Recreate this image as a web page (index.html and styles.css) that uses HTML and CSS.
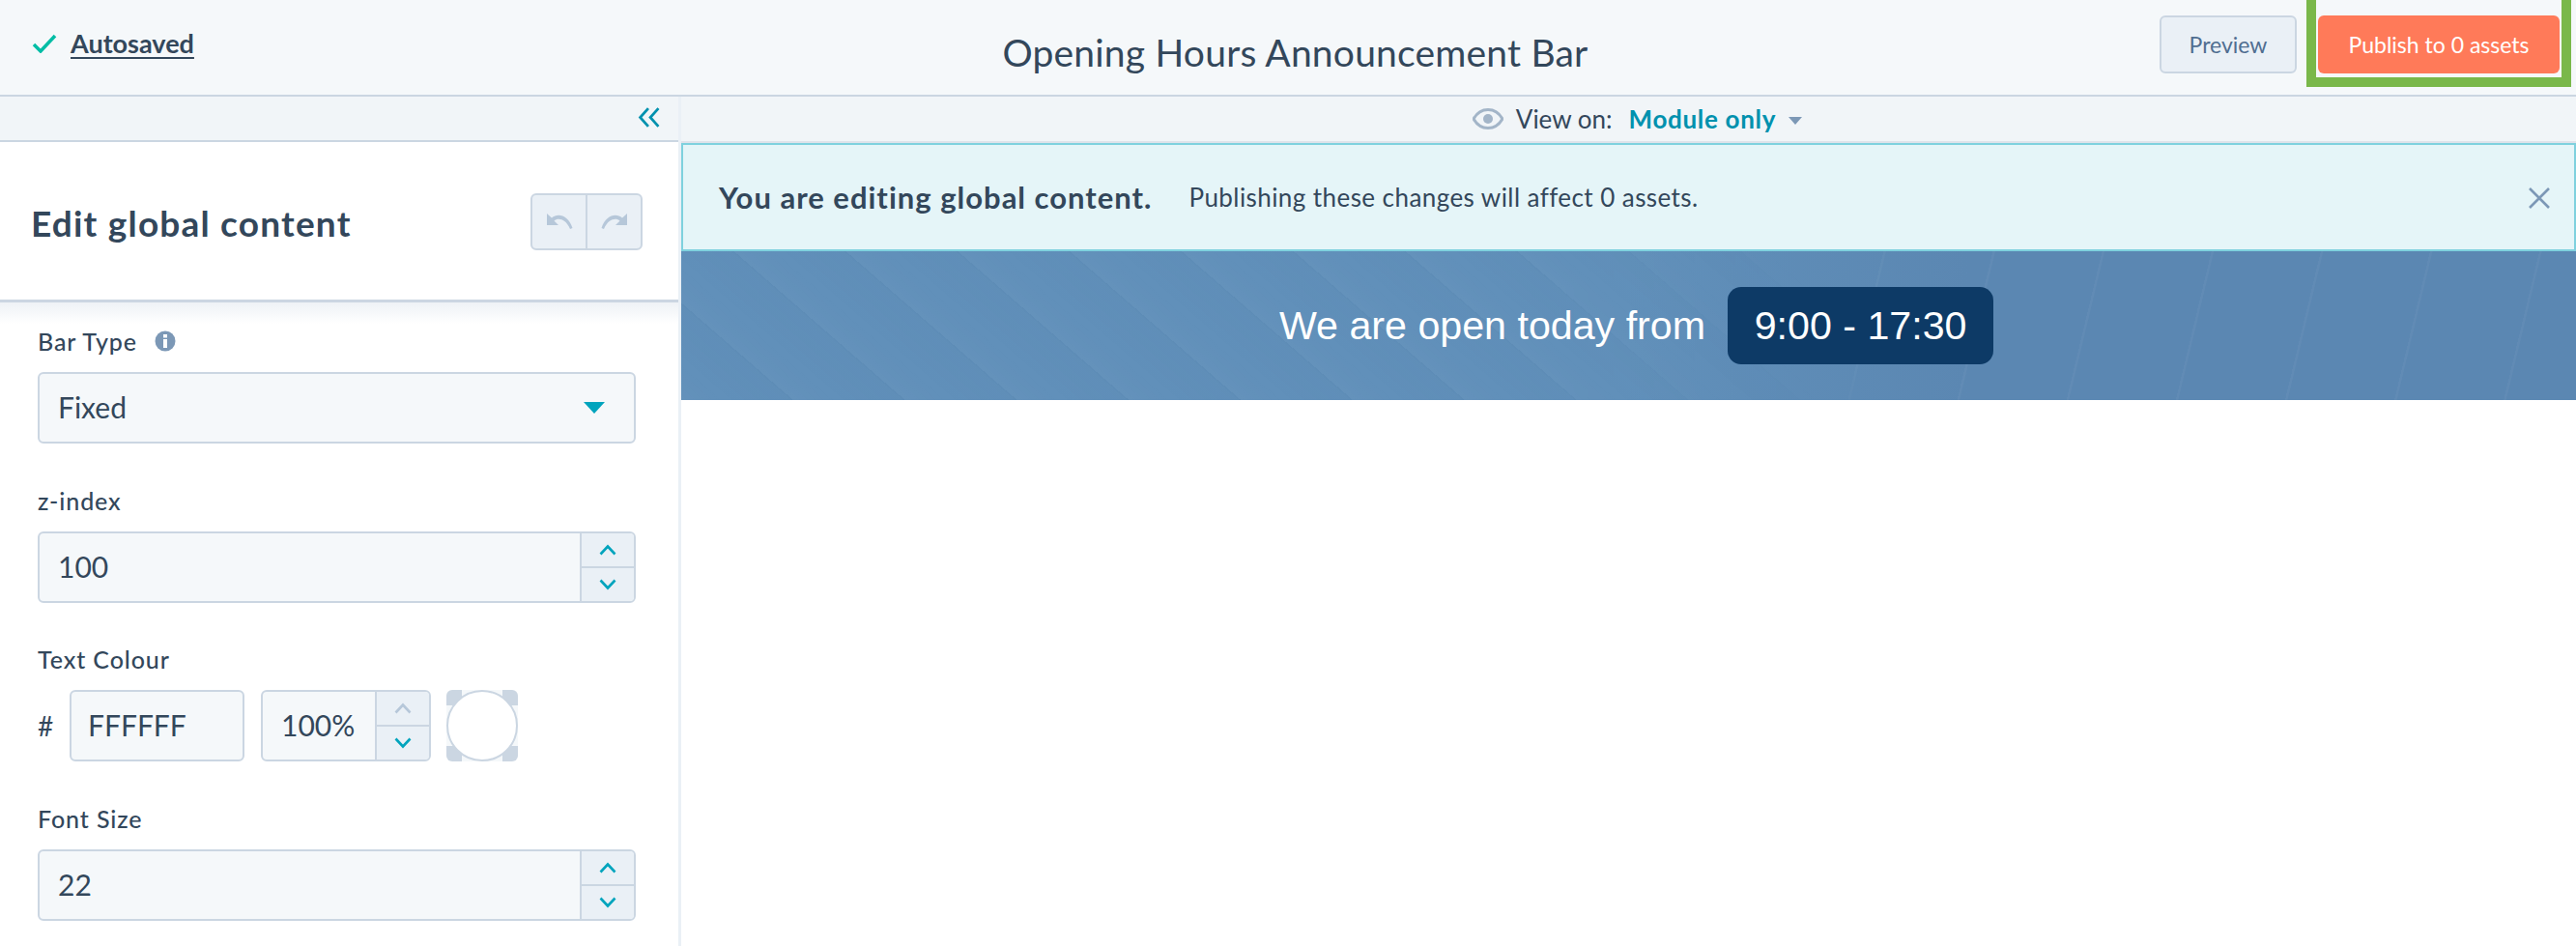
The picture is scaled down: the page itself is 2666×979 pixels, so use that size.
FILE: index.html
```html
<!DOCTYPE html>
<html lang="en">
<head>
<meta charset="utf-8">
<title>Opening Hours Announcement Bar</title>
<link rel="stylesheet" href="styles.css">
</head>
<body>
<header class="topbar">
  <div class="saved">
    <svg class="check" viewBox="0 0 26 20"><path d="M2 11l7 7L24 2" fill="none" stroke="#00bda5" stroke-width="3.500"/></svg>
    <a class="saved-link">Autosaved</a>
  </div>
  <h1 class="doc-title">Opening Hours Announcement Bar</h1>
  <div class="actions">
    <button class="btn-preview">Preview</button>
    <button class="btn-publish">Publish to 0 assets</button>
  </div>
  <div class="highlight"></div>
</header>
<div class="workspace">
  <aside class="sidebar">
    <div class="collapse-row">
      <svg class="collapse" viewBox="0 0 22 20"><path d="M10 1L2 10l8 9M20 1l-8 9 8 9" fill="none" stroke="#0091ae" stroke-width="2.600"/></svg>
    </div>
    <div class="panel-head">
      <h2 class="panel-title">Edit global content</h2>
      <div class="undo-group">
        <span class="undo-btn"><svg viewBox="0 0 30 22" class="undo-icon"><path d="M2 2v12h12l-4.500-4.500C13 6.500 21 6.500 26 18l2.500-1C24 3 13 1 7 6.500z" fill="#b6c7d9"/></svg></span>
        <span class="undo-btn"><svg viewBox="0 0 30 22" class="undo-icon flip"><path d="M2 2v12h12l-4.500-4.500C13 6.500 21 6.500 26 18l2.500-1C24 3 13 1 7 6.500z" fill="#b6c7d9"/></svg></span>
      </div>
    </div>
    <div class="fields">
      <div class="field">
        <label class="field-label">Bar Type
          <svg class="info" viewBox="0 0 22 22"><circle cx="11" cy="11" r="10.500" fill="#7c98b6"/><rect x="9" y="9" width="4" height="9" fill="#fff"/><rect x="9" y="4" width="4" height="3.500" fill="#fff"/></svg>
        </label>
        <div class="input select"><span class="value">Fixed</span><span class="caret"></span></div>
      </div>
      <div class="field">
        <label class="field-label">z-index</label>
        <div class="input number">
          <span class="value">100</span>
          <div class="stepper">
            <span class="step"><svg class="chev" viewBox="0 0 18 12"><path d="M1.500 10.500L9 2.500l7.500 8" fill="none" stroke="#00a4bd" stroke-width="2.600"/></svg></span>
            <span class="step"><svg class="chev" viewBox="0 0 18 12"><path d="M1.500 1.500L9 9.500l7.500-8" fill="none" stroke="#00a4bd" stroke-width="2.600"/></svg></span>
          </div>
        </div>
      </div>
      <div class="field">
        <label class="field-label">Text Colour</label>
        <div class="color-row">
          <span class="hash">#</span>
          <div class="input hex"><span class="value">FFFFFF</span></div>
          <div class="input percent">
            <span class="value">100%</span>
            <div class="stepper">
              <span class="step"><svg class="chev" viewBox="0 0 18 12"><path d="M1.500 10.500L9 2.500l7.500 8" fill="none" stroke="#b6c7d9" stroke-width="2.600"/></svg></span>
              <span class="step"><svg class="chev" viewBox="0 0 18 12"><path d="M1.500 1.500L9 9.500l7.500-8" fill="none" stroke="#00a4bd" stroke-width="2.600"/></svg></span>
            </div>
          </div>
          <div class="swatch"><span class="swatch-circle"></span></div>
        </div>
      </div>
      <div class="field">
        <label class="field-label">Font Size</label>
        <div class="input number">
          <span class="value">22</span>
          <div class="stepper">
            <span class="step"><svg class="chev" viewBox="0 0 18 12"><path d="M1.500 10.500L9 2.500l7.500 8" fill="none" stroke="#00a4bd" stroke-width="2.600"/></svg></span>
            <span class="step"><svg class="chev" viewBox="0 0 18 12"><path d="M1.500 1.500L9 9.500l7.500-8" fill="none" stroke="#00a4bd" stroke-width="2.600"/></svg></span>
          </div>
        </div>
      </div>
    </div>
  </aside>
  <main class="preview">
    <div class="viewbar">
      <svg class="eye" viewBox="0 0 32 22"><path d="M1 11C5 4 10 1.500 16 1.500S27 4 31 11c-4 7-9 9.500-15 9.500S5 18 1 11z" fill="none" stroke="#a3b5c8" stroke-width="3"/><circle cx="16" cy="11" r="5" fill="#a3b5c8"/></svg>
      <span class="view-label">View on:</span>
      <span class="view-value">Module only</span>
      <span class="view-caret"></span>
    </div>
    <div class="notice">
      <strong class="notice-strong">You are editing global content.</strong>
      <span class="notice-text">Publishing these changes will affect 0 assets.</span>
      <svg class="close" viewBox="0 0 24 24"><path d="M2 2l20 20M22 2L2 22" fill="none" stroke="#7c98b6" stroke-width="2.600"/></svg>
    </div>
    <section class="announce">
      <span class="announce-text">We are open today from</span>
      <span class="hours">9:00 - 17:30</span>
    </section>
  </main>
</div>
</body>
</html>
```
FILE: styles.css
```css
* { box-sizing: border-box; }
html, body { margin: 0; height: 100%; overflow: hidden; }
body { font-family: Lato, "Liberation Sans", sans-serif; color: #33475b; background: #fff; display: flex; flex-direction: column; }

.topbar { position: relative; height: 100px; flex: none; background: #f5f8fa; border-bottom: 2px solid #cbd6e2; display: flex; align-items: center; justify-content: space-between; padding: 0 17px 0 33px; }
.saved { display: flex; align-items: center; gap: 14px; margin-top: -9px; }
.check { width: 26px; height: 20px; }
.saved-link { font-size: 27px; font-weight: 700; text-decoration: underline; text-decoration-thickness: 2px; text-underline-offset: 4px; }
.doc-title { position: absolute; left: 15px; right: 0; top: 32px; margin: 0; text-align: center; font-size: 39px; line-height: 44px; font-weight: 400; letter-spacing: .2px; }
.actions { display: flex; gap: 22px; margin-top: -6px; }
.btn-preview, .btn-publish { font-family: inherit; font-size: 23px; height: 60px; border-radius: 6px; padding: 0; }
.btn-preview { width: 142px; background: #eaf0f6; color: #506e91; border: 2px solid #cbd6e2; }
.btn-publish { width: 250px; background: #ff7a59; color: #fff; border: 0; }
.highlight { position: absolute; left: 2387px; top: -10px; width: 274px; height: 100px; border: 10px solid #7ab84a; }

.workspace { flex: 1; display: flex; min-height: 0; }
.sidebar { width: 705px; flex: none; background: #fff; border-right: 3px solid #eaf0f6; display: flex; flex-direction: column; }
.collapse-row { height: 47px; flex: none; background: #f1f5f8; border-bottom: 2px solid #cbd6e2; display: flex; align-items: center; justify-content: flex-end; padding: 0 18px 2px 0; }
.collapse { width: 24px; height: 21px; }
.panel-head { height: 166px; flex: none; border-bottom: 3px solid #cbd6e2; display: flex; align-items: center; justify-content: space-between; padding: 0 37px 0 32px; }
.panel-title { margin: 4px 0 0; font-size: 37px; font-weight: 700; letter-spacing: 1.2px; }
.undo-group { display: flex; width: 116px; height: 59px; background: #eaf0f6; border: 2px solid #cbd6e2; border-radius: 6px; margin-top: 2px; }
.undo-btn { flex: 1; display: flex; align-items: center; justify-content: center; }
.undo-btn + .undo-btn { border-left: 2px solid #cbd6e2; }
.undo-icon { width: 30px; height: 22px; }
.flip { transform: scaleX(-1); }

.fields { flex: 1; padding: 24px 44px 0 39px; background: linear-gradient(#eef2f6, #fff 22px); background-repeat: no-repeat; display: flex; flex-direction: column; gap: 42.6px; }
.field-label { display: flex; align-items: center; gap: 18px; font-size: 25px; letter-spacing: .9px; line-height: 32px; margin-bottom: 16px; font-weight: 500; }
.info { width: 22px; height: 22px; }
.input { height: 74px; background: #f5f8fa; border: 2px solid #cbd6e2; border-radius: 6px; display: flex; align-items: center; font-size: 30px; overflow: hidden; }
.value { padding-left: 19px; margin-top: -2px; }
.select { justify-content: space-between; padding-right: 30px; }
.caret { width: 0; height: 0; border-left: 11px solid transparent; border-right: 11px solid transparent; border-top: 12px solid #00a4bd; }
.number { justify-content: space-between; }
.stepper { width: 56px; align-self: stretch; flex: none; display: flex; flex-direction: column; border-left: 2px solid #cbd6e2; background: #eaf0f6; }
.step { flex: 1; display: flex; align-items: center; justify-content: center; }
.step + .step { border-top: 2px solid #cbd6e2; }
.chev { width: 18px; height: 12px; }
.color-row { display: flex; align-items: center; }
.hash { width: 33px; font-size: 28px; }
.hex { width: 181px; margin-right: 17px; }
.hex .value { padding-left: 17px; }
.percent { width: 176px; margin-right: 16px; justify-content: space-between; }
.swatch { width: 74px; height: 74px; border-radius: 6px; background-color: #f5f8fa; background-image: linear-gradient(#cbd6e2, #cbd6e2), linear-gradient(#cbd6e2, #cbd6e2), linear-gradient(#cbd6e2, #cbd6e2), linear-gradient(#cbd6e2, #cbd6e2); background-size: 16px 16px; background-repeat: no-repeat; background-position: 0 0, 100% 0, 0 100%, 100% 100%; display: flex; }
.swatch-circle { flex: 1; background: #fff; border: 2px solid #cbd6e2; border-radius: 50%; }

.preview { flex: 1; min-width: 0; display: flex; flex-direction: column; background: #fff; }
.viewbar { height: 48px; flex: none; background: #f1f5f8; border-bottom: 2px solid #dfe3eb; display: flex; align-items: center; justify-content: center; gap: 13px; font-size: 26px; padding: 0 0 0 18px; }
.eye { width: 32px; height: 22px; }
.view-value { font-weight: 700; color: #0091ae; margin-left: 4px; letter-spacing: .7px; }
.view-caret { width: 0; height: 0; border-left: 7px solid transparent; border-right: 7px solid transparent; border-top: 8px solid #7c98b6; margin-top: 3px; }
.notice { position: relative; height: 112px; flex: none; background: #e5f5f8; border: 2px solid #7fd1de; display: flex; align-items: center; padding: 0 37px; font-size: 26px; letter-spacing: .43px; gap: 38px; }
.notice-strong { font-weight: 700; font-size: 31px; letter-spacing: 1px; }
.close { position: absolute; right: 24px; top: 43px; width: 24px; height: 24px; }
.announce { position: relative; overflow: hidden; height: 154px; flex: none; display: flex; align-items: center; justify-content: center; gap: 23px; padding-left: 16px; font-family: "Liberation Sans", Arial, sans-serif; color: #fff; font-size: 41.2px; background: linear-gradient(90deg, #6190ba 0%, #6190ba 50%, #5b87b2 68%); }
.announce::before { content: ""; position: absolute; inset: 0; background-image: repeating-linear-gradient(41deg, rgba(255,255,255,.02) 0 2px, rgba(255,255,255,0) 30px, rgba(30,70,110,.02) 74px, rgba(30,70,110,.05) 76px); -webkit-mask-image: linear-gradient(90deg, #000 45%, transparent 62%); mask-image: linear-gradient(90deg, #000 45%, transparent 62%); }
.announce::after { content: ""; position: absolute; inset: 0; background-image: repeating-linear-gradient(103.500deg, rgba(255,255,255,.04) 0 2px, rgba(255,255,255,0) 3px 110px); -webkit-mask-image: linear-gradient(90deg, transparent 58%, #000 64%); mask-image: linear-gradient(90deg, transparent 58%, #000 64%); }
.announce-text, .hours { position: relative; z-index: 1; }
.hours { background: #0d3a66; border-radius: 14px; width: 275px; height: 80px; display: flex; align-items: center; justify-content: center; }
```
